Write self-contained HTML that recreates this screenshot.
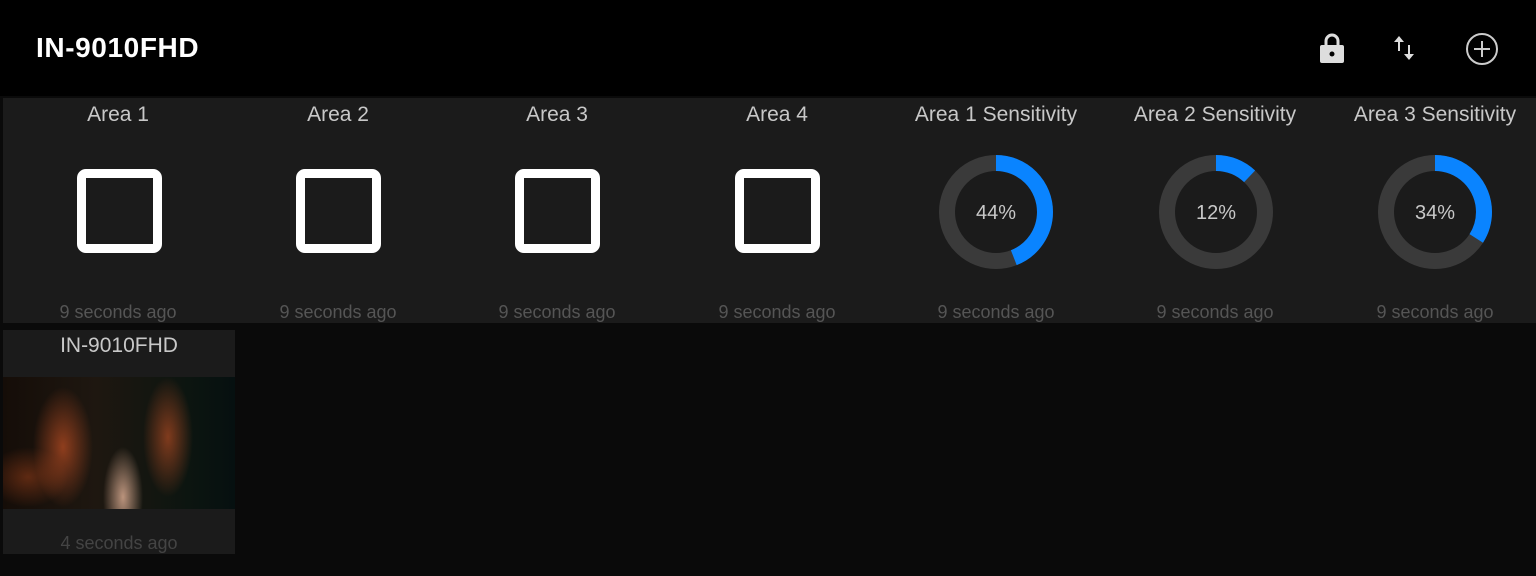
<!DOCTYPE html>
<html><head><style>
*{margin:0;padding:0;box-sizing:border-box}
body{width:1536px;height:576px;background:#0a0a0a;font-family:"Liberation Sans",sans-serif;position:relative;overflow:hidden}
.hdr{position:absolute;left:0;top:0;width:1536px;height:96px;background:#000}
.ttl{position:absolute;left:36px;top:32px;font-size:28px;font-weight:bold;color:#fff;letter-spacing:0.6px}
.row{position:absolute;left:3px;top:98px;width:1533px;height:225px;background:#1b1b1b}
.t{position:absolute;width:220px;text-align:center;color:#c8c8c8;font-size:21px}
.ts{position:absolute;width:220px;text-align:center;color:#555;font-size:18px}
.sq{position:absolute;width:85px;height:84px;border:9px solid #fff;border-radius:9px}
.card{position:absolute;left:3px;top:330px;width:232px;height:224px;background:#1b1b1b}
.img{position:absolute;left:3px;top:377px;width:232px;height:132px;background:
radial-gradient(ellipse 20px 50px at 120px 120px,rgba(255,200,170,.7),transparent),
radial-gradient(ellipse 30px 60px at 60px 70px,rgba(220,90,40,.6),transparent),
radial-gradient(ellipse 25px 60px at 165px 60px,rgba(220,90,40,.55),transparent),
radial-gradient(ellipse 40px 30px at 25px 100px,rgba(200,80,30,.4),transparent),
linear-gradient(90deg,#150d08,#1e1710 40%,#0c1510 80%,#061010)}
</style></head><body>
<div class="hdr"><div class="ttl">IN-9010FHD</div>
<svg style="position:absolute;left:1318px;top:32px" width="28" height="32" viewBox="0 0 28 32"><path d="M8 14V9a6 6 0 0 1 12 0v5" fill="none" stroke="#ddd" stroke-width="3"/><rect x="2" y="13" width="24" height="18" rx="2" fill="#ddd"/><circle cx="14" cy="22" r="2.5" fill="#000"/></svg>
<svg style="position:absolute;left:1392px;top:34px" width="26" height="28" viewBox="0 0 26 28"><path d="M7 2L2 8h4v9h2V8h4z M17 26l5-6h-4v-9h-2v9h-4z" fill="#ddd"/></svg>
<svg style="position:absolute;left:1464px;top:31px" width="36" height="36" viewBox="0 0 36 36"><circle cx="18" cy="18" r="15" fill="none" stroke="#ccc" stroke-width="2"/><path d="M18 10v16M10 18h16" stroke="#ccc" stroke-width="2"/></svg>
</div>
<div class="row"></div>
<div class="t" style="left:8px;top:103px">Area 1</div>
<div class="t" style="left:228px;top:103px">Area 2</div>
<div class="t" style="left:447px;top:103px">Area 3</div>
<div class="t" style="left:667px;top:103px">Area 4</div>
<div class="t" style="left:886px;top:103px">Area 1 Sensitivity</div>
<div class="t" style="left:1105px;top:103px">Area 2 Sensitivity</div>
<div class="t" style="left:1325px;top:103px">Area 3 Sensitivity</div>
<div class="sq" style="left:77px;top:169px"></div>
<div class="sq" style="left:296px;top:169px"></div>
<div class="sq" style="left:515px;top:169px"></div>
<div class="sq" style="left:735px;top:169px"></div>
<svg style="position:absolute;left:0;top:0" width="1536" height="576">
<g fill="none" stroke-width="16">
<circle cx="996" cy="212" r="49" stroke="#3a3a3a"/>
<circle cx="996" cy="212" r="49" stroke="#0a84ff" stroke-dasharray="135.5 400" transform="rotate(-90 996 212)"/>
<circle cx="1216" cy="212" r="49" stroke="#3a3a3a"/>
<circle cx="1216" cy="212" r="49" stroke="#0a84ff" stroke-dasharray="37 400" transform="rotate(-90 1216 212)"/>
<circle cx="1435" cy="212" r="49" stroke="#3a3a3a"/>
<circle cx="1435" cy="212" r="49" stroke="#0a84ff" stroke-dasharray="104.7 400" transform="rotate(-90 1435 212)"/>
</g>
<g fill="#c8c8c8" font-family="Liberation Sans" font-size="20" text-anchor="middle">
<text x="996" y="219">44%</text><text x="1216" y="219">12%</text><text x="1435" y="219">34%</text>
</g></svg>
<div class="ts" style="left:8px;top:302px">9 seconds ago</div>
<div class="ts" style="left:228px;top:302px">9 seconds ago</div>
<div class="ts" style="left:447px;top:302px">9 seconds ago</div>
<div class="ts" style="left:667px;top:302px">9 seconds ago</div>
<div class="ts" style="left:886px;top:302px">9 seconds ago</div>
<div class="ts" style="left:1105px;top:302px">9 seconds ago</div>
<div class="ts" style="left:1325px;top:302px">9 seconds ago</div>
<div class="card"></div>
<div class="t" style="left:9px;top:334px">IN-9010FHD</div>
<div class="img"></div>
<div class="ts" style="left:9px;top:533px;color:#444">4 seconds ago</div>
</body></html>
